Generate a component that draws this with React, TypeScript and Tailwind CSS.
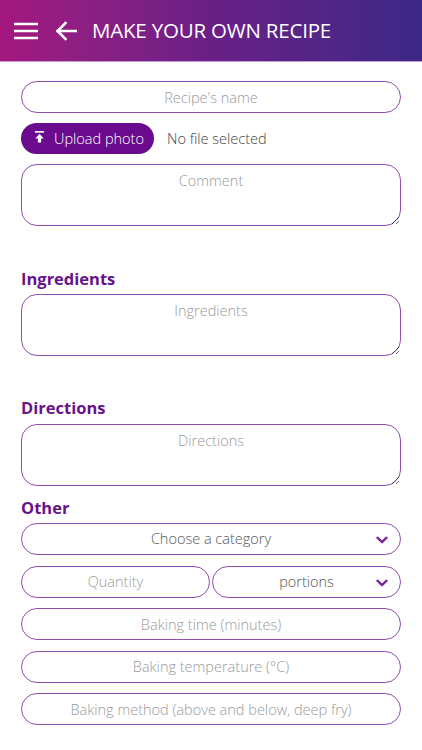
import React from 'react';

const font = { fontFamily: '"Open Sans", "Noto Sans", sans-serif' };

function Chevron() {
  return (
    <svg width="12" height="8" viewBox="0 0 12 8" className="absolute right-[12px] top-1/2 -translate-y-[35%]">
      <path d="M1.5 1.5 L6 6 L10.5 1.5" fill="none" stroke="#7b2b9e" strokeWidth="2.4" strokeLinecap="round" strokeLinejoin="round" />
    </svg>
  );
}

function Field({ placeholder, width = 'w-full' }: { placeholder: string; width?: string }) {
  return (
    <input
      placeholder={placeholder}
      className={`h-[32px] ${width} min-w-0 rounded-full border-[1.5px] border-[#8f4fae] bg-white text-center text-[14.5px] font-light text-[#555] placeholder:text-[#9a9a9a] outline-none`}
    />
  );
}

function Area({ placeholder }: { placeholder: string }) {
  return (
    <textarea
      placeholder={placeholder}
      className="block h-[62px] w-full rounded-[16px] border-[1.5px] border-[#8f4fae] bg-white px-3 pt-[5px] text-center text-[14.5px] font-light placeholder:text-[#9a9a9a] outline-none"
    />
  );
}

function Heading({ children }: { children: React.ReactNode }) {
  return <h2 className="text-[16.5px] font-bold leading-[22px] text-[#67138a]">{children}</h2>;
}

export default function App() {
  return (
    <div className="min-h-[750px] w-[422px] bg-white" style={font}>
      <header className="flex h-[62px] items-center border-b border-[#c49bdd] bg-gradient-to-r from-[#a4177f] via-[#6a1f86] to-[#3b2786] px-[14px]">
        <svg width="24" height="18" viewBox="0 0 24 18" className="mr-[17px]">
          <path d="M0 2h24M0 9h24M0 16h24" stroke="white" strokeWidth="2.4" />
        </svg>
        <svg width="22" height="20" viewBox="0 0 22 20" className="mr-[15px]">
          <path d="M21 10H2.5M10.5 2L2.5 10l8 8" fill="none" stroke="white" strokeWidth="2.6" strokeLinecap="square" />
        </svg>
        <h1 className="text-[20.5px] text-white tracking-[-0.2px]">MAKE YOUR OWN RECIPE</h1>
      </header>

      <main className="px-[21px] pt-[19px]">
        <Field placeholder="Recipe's name" />

        <div className="mt-[10px] flex items-center">
          <button className="flex h-[31px] items-center rounded-full bg-[#6a0a8c] pl-[13px] pr-[10px] text-[14.5px] text-white">
            <svg width="11" height="12" viewBox="0 0 12 13" className="mr-[9px] -mt-[3px]">
              <rect x="1" y="0" width="10" height="1.8" fill="white" />
              <path d="M6 3L1.5 8H4.2v4.5h3.6V8h2.7z" fill="white" />
            </svg>
            <span className="font-light">Upload photo</span>
          </button>
          <span className="ml-[13px] text-[14.5px] font-light text-[#444]">No file selected</span>
        </div>

        <div className="mt-[10px]">
          <Area placeholder="Comment" />
        </div>

        <div className="mt-[42px]">
          <Heading>Ingredients</Heading>
        </div>
        <div className="mt-[4px]">
          <Area placeholder="Ingredients" />
        </div>

        <div className="mt-[41px]">
          <Heading>Directions</Heading>
        </div>
        <div className="mt-[5px]">
          <Area placeholder="Directions" />
        </div>

        <div className="mt-[11px]">
          <Heading>Other</Heading>
        </div>

        <div className="mt-[4px] flex flex-col gap-[10.5px]">
          <div className="relative flex h-[32px] items-center justify-center rounded-full border-[1.5px] border-[#8f4fae] text-[14.5px] font-light text-[#555]">
            Choose a category
            <Chevron />
          </div>
          <div className="flex gap-[2px]">
            <Field placeholder="Quantity" width="w-[189px] shrink-0" />
            <div className="relative flex h-[32px] flex-1 items-center justify-center rounded-full border-[1.5px] border-[#8f4fae] text-[14.5px] font-light text-[#555]">
              portions
              <Chevron />
            </div>
          </div>
          <Field placeholder="Baking time (minutes)" />
          <Field placeholder="Baking temperature (°C)" />
          <Field placeholder="Baking method (above and below, deep fry)" />
        </div>
      </main>
    </div>
  );
}
